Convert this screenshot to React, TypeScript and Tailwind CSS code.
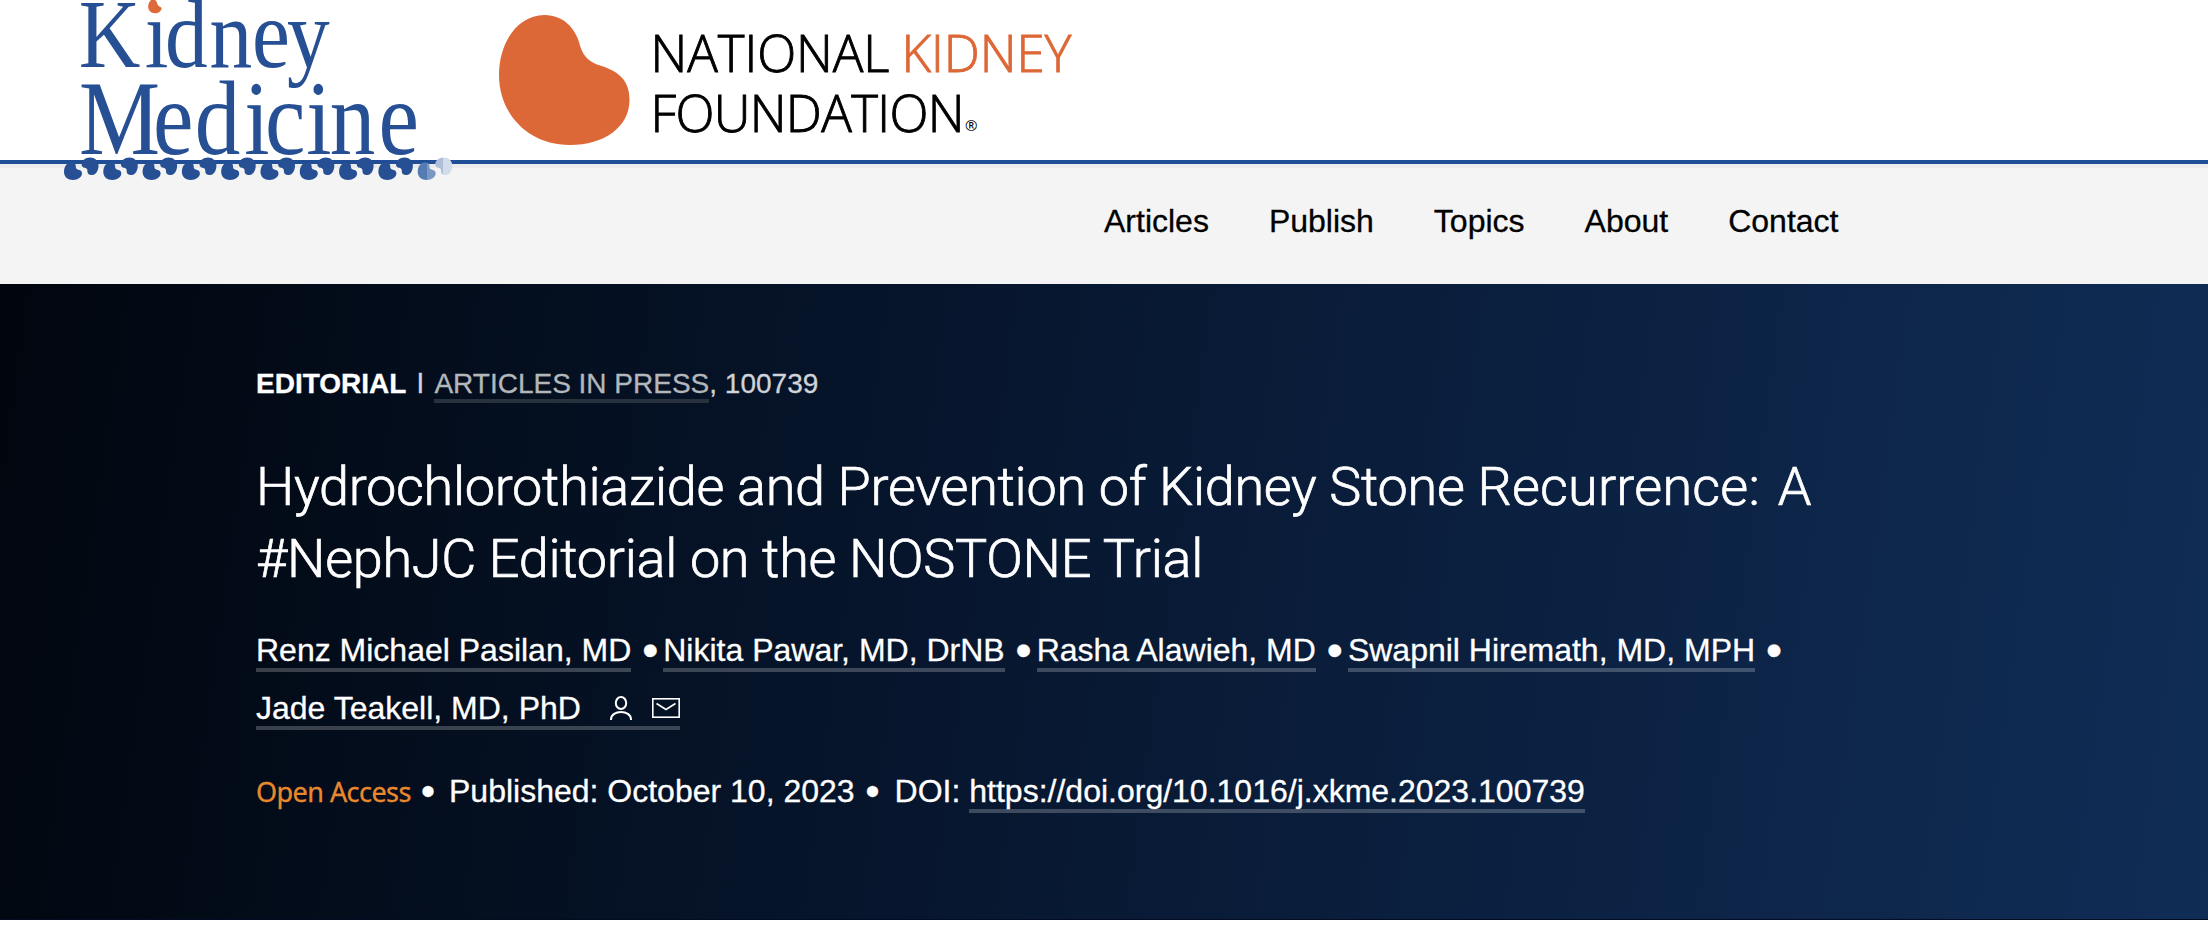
const navItems = ['Articles', 'Publish', 'Topics', 'About', 'Contact'];

const authors = ['Renz Michael Pasilan, MD', 'Nikita Pawar, MD, DrNB', 'Rasha Alawieh, MD', 'Swapnil Hiremath, MD, MPH'];

const BEAN = 'M6.5 0 C10 -0.3 12 1.5 11.8 3.5 C11.6 5.5 12.4 7 14.5 7.2 C17 7.4 18 9 18 11 C18 14.500 14 17.500 9 17.500 C4 17.500 0 14.500 0 9.500 C0 4 2.800 0.3 6.500 0 Z';

// the chain fades out over its last pair
const chain = Array.from({ length: 10 }, (_, i) => ({
    x: 64 + i * 39.3,
    lower: i === 9 ? 'url(#fade-lower)' : '#264f94',
    upper: i === 9 ? 'url(#fade-upper)' : '#264f94',
}));

function JournalLogo() {
    return (
        <svg className="relative z-10 h-[184px] w-[390px] shrink-0" viewBox="64 0 390 184" fill="#264f94">
            <defs>
                <linearGradient id="fade-lower">
                    <stop offset="0.5" stopColor="#557cb2" />
                    <stop offset="0.5" stopColor="#7a98c4" />
                </linearGradient>
                {/* drawn rotated, so the first stop is the right-hand side */}
                <linearGradient id="fade-upper">
                    <stop offset="0.55" stopColor="#d3dcea" />
                    <stop offset="0.55" stopColor="#adbfda" />
                </linearGradient>
            </defs>
            <g className="font-['Liberation_Serif','Times_New_Roman',serif]">
                <text transform="scale(0.88 1)" x="89.5 164.5 187.500 238 286.500 326" y="66.500" fontSize="97">
                    Kidney
                </text>
                <text transform="scale(0.86 1)" x="92 178 226.500 284 308 356 383.500 440" y="154" fontSize="106">
                    Medicine
                </text>
            </g>
            <rect x="145" y="0" width="20" height="17" fill="#fff" />
            <path d="M151 0 C148 3 147.500 7 149 10 C151 13.500 157 14.500 160 11.500 C162.500 9 162 7.500 159.500 6.500 C156.500 5 158 2 155 0 Z" fill="#dd6a38" />
            {chain.map(({ x, lower, upper }) => (
                <g key={x}>
                    <path d={BEAN} fill={lower} transform={`translate(${x} 162.500)`} />
                    <path d={BEAN} fill={upper} transform={`translate(${x + 34.5} 175) rotate(180) scale(0.94 1)`} />
                </g>
            ))}
        </svg>
    );
}

function FoundationLogo() {
    return (
        <svg className="ml-[45px] h-[160px] w-[580px] shrink-0" viewBox="499 0 580 160">
            <path
                d="M544.5 15 C564 15 575 29 579 42 C582 55 588 61 597 64.5 C619 71 629.5 80 629.5 100 C629.5 127 604 145 570 145 C527 145 499 113 499 75 C499 42 518 15 544.5 15 Z"
                fill="#dd6837"
            />
            <g className="font-['Open_Sans',sans-serif]" fontSize="51" fontWeight="300" strokeWidth="0.9">
                <text x="650.500" y="72" textLength="239" fill="#000" stroke="#000">NATIONAL</text>
                <text x="901.500" y="72" textLength="170" fill="#dd6837" stroke="#dd6837">KIDNEY</text>
                <text x="650.500" y="132" textLength="314" fill="#000" stroke="#000">FOUNDATION</text>
            </g>
            <text x="965" y="131" fontSize="15" className="font-['Open_Sans',sans-serif]">®</text>
        </svg>
    );
}

function Bullet({ className }: { className: string }) {
    return <span className={`inline-flex h-8 items-center justify-center leading-8 ${className}`}>•</span>;
}

export default function App() {
    return (
        <div className="h-[950px] w-[2208px] overflow-hidden bg-white font-['Liberation_Sans',Arial,sans-serif] [-webkit-text-stroke-width:0.3px]">
            <div className="flex h-[160px] items-start bg-white pl-16">
                <JournalLogo />
                <FoundationLogo />
            </div>
            <nav className="h-[124px] border-t-4 border-[#1f4e96] bg-[#f4f4f4]">
                <div className="h-1 bg-[#ebebeb]" />
                <div className="flex gap-[60px] pt-[29px] pl-[1104px] text-[32px] leading-12 text-black">
                    {navItems.map((item) => (
                        <a key={item}>{item}</a>
                    ))}
                </div>
            </nav>
            <header className="h-[636px] border-b border-[#020c22] bg-[linear-gradient(98deg,#01060e,#06142a_38%,#0b2040_68%,#102d56)] pt-[79px] pl-64 text-white">
                <div className="flex h-[42px] items-baseline text-[28px] leading-[42px] whitespace-pre text-[#d0d3d7]">
                    <strong className="text-white">EDITORIAL</strong>
                    <span className="w-[28px] text-center font-['Roboto']">I</span>
                    <a className="h-[40px] border-b-4 border-[#28323f] text-[#b3b7bc]">ARTICLES IN PRESS</a>
                    <span>, 100739</span>
                </div>
                <h1 className="mt-[46px] font-['Roboto',sans-serif] text-[54px] leading-[72px] font-light tracking-[-0.3px] [-webkit-text-stroke-width:0.7px]">
                    Hydrochlorothiazide and Prevention of Kidney Stone <span className="tracking-[0.2px]">Recurrence:</span>{' '}
                    <span className="ml-[5px]">A</span>
                    <br />
                    #NephJC Editorial on the NOSTONE Trial
                </h1>
                <div className="mt-[33px] text-[32px] leading-[44px]">
                    <div className="flex h-[58px] items-start">
                        {authors.map((author) => (
                            <div key={author} className="flex items-start">
                                <a className="h-[44px] border-b-4 border-white/22">{author}</a>
                                <Bullet className="mt-[6px] w-8 pl-1.5 text-[46px]" />
                            </div>
                        ))}
                    </div>
                    <a className="flex h-[44px] w-[424px] items-start border-b-4 border-white/22">
                        Jade Teakell, MD, PhD
                        <svg className="mt-[10px] ml-auto h-6 w-[22px]" viewBox="0 0 22 24" fill="none" stroke="#fff" strokeWidth="2">
                            <ellipse cx="11" cy="7" rx="5.200" ry="6" />
                            <path d="M1 24 V23.500 C1 13.500 21 13.500 21 23.500 V24" />
                        </svg>
                        <svg className="mt-[12px] ml-5 h-5 w-7" viewBox="0 0 28 20" fill="none" stroke="#fff" strokeWidth="1.6">
                            <rect x="0.800" y="0.800" width="26.400" height="18.400" />
                            <path d="M4.500 5.500 L14 11.500 L23.500 5.500" />
                        </svg>
                    </a>
                </div>
                <div className="mt-[39px] flex items-start text-[32px] leading-[44px]">
                    <span className="w-[155px] pt-px font-['Noto_Sans',sans-serif] text-[27px] tracking-[-0.55px] whitespace-nowrap text-[#e9892f]">Open Access</span>
                    <Bullet className="mt-[6px] w-[38px] pr-1 text-[40px]" />
                    <span>Published: October 10, 2023</span>
                    <Bullet className="mt-[6px] w-[40px] pr-1 text-[40px]" />
                    <span className="whitespace-pre">DOI: </span>
                    <a className="h-[44px] border-b-4 border-white/22">https://doi.org/10.1016/j.xkme.2023.100739</a>
                </div>
            </header>
        </div>
    );
}
